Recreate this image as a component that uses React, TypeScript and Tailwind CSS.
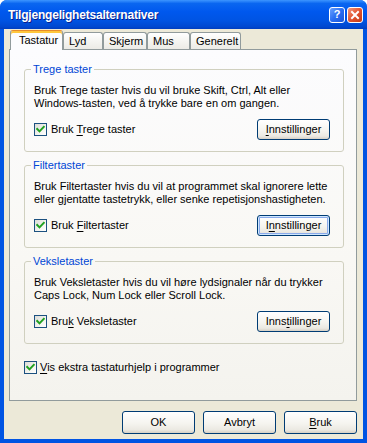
import React from 'react';

const CheckBox = () => (
  <span className="flex h-[13px] w-[13px] shrink-0 items-center justify-center border border-[#1c5180] bg-[linear-gradient(135deg,#dcdcd7_0%,#f4f4f0_60%,#ffffff_100%)]">
    <svg width="11" height="11" viewBox="0 0 11 11">
      <path d="M2.2 5 L4.5 7.4 L8.8 2.8" fill="none" stroke="#21a121" strokeWidth="2" strokeLinecap="square" />
    </svg>
  </span>
);

const U = ({ children }: { children: React.ReactNode }) => (
  <span className="underline underline-offset-[2px]">{children}</span>
);

const XPButton = ({
  children,
  focused,
  className = '',
}: {
  children: React.ReactNode;
  focused?: boolean;
  className?: string;
}) => (
  <button
    className={`flex w-[73px] shrink-0 items-center justify-center rounded-[3px] border border-[#003c74] bg-[linear-gradient(180deg,#ffffff_0%,#f5f4ef_55%,#ebe9e2_85%,#d6d0c5_100%)] text-[11px] leading-none text-black ${
      focused ? 'shadow-[inset_0_0_0_1px_#cee7ff,inset_0_0_0_2px_#8aaaea]' : ''
    } ${className}`}
  >
    {children}
  </button>
);

const GroupBox = ({
  title,
  text,
  label,
  button,
  focused,
}: {
  title: string;
  text: React.ReactNode;
  label: React.ReactNode;
  button: React.ReactNode;
  focused?: boolean;
}) => (
  <fieldset className="h-[89px] w-[320px] rounded-[3px] border border-[#d0d0bf] pl-[9px] pr-[13px]">
    <legend className="-ml-[3px] px-[2px] text-[11px] leading-[13px] text-[#0046d5]">{title}</legend>
    <p className="mt-[8px] text-[11px] leading-[13px] text-black">{text}</p>
    <div className="mt-[9px] flex h-[21px] items-center justify-between">
      <div className="flex items-center gap-[4px] text-[11px] text-black">
        <CheckBox />
        <span>{label}</span>
      </div>
      <XPButton focused={focused} className="h-[21px]">
        {button}
      </XPButton>
    </div>
  </fieldset>
);

const Tab = ({ children, w, active }: { children: React.ReactNode; w: string; active?: boolean }) =>
  active ? (
    <div
      className={`relative z-10 -mb-px h-[20px] ${w} rounded-t-[3px] border-x border-t border-x-[#919b9c] border-t-[#e68b2c] bg-[#fcfcfe] pl-[8px] pt-[3px] text-[11px] leading-[13px] text-black shadow-[inset_0_2px_0_#ffc73c]`}
    >
      {children}
    </div>
  ) : (
    <div
      className={`h-[17px] ${w} rounded-t-[3px] border-x border-t border-[#919b9c] bg-[linear-gradient(180deg,#ffffff_0%,#f3f3ef_60%,#ecebe6_100%)] pl-[5px] pt-[2px] text-[11px] leading-[13px] text-black`}
    >
      {children}
    </div>
  );

export default function App() {
  return (
    <div className="flex h-[443px] w-[367px] flex-col overflow-hidden rounded-t-[7px] bg-[#0054e3] font-['Liberation_Sans',Arial,sans-serif]">
      {/* Title bar */}
      <div className="flex h-[29px] shrink-0 items-center justify-between bg-[linear-gradient(180deg,#3d95ff_0%,#0a66f0_12%,#0058ee_40%,#0054e3_70%,#0048d0_92%,#003dbf_100%)] pl-[8px] pr-[4px]">
        <span className="text-[12px] font-bold tracking-[-0.2px] text-white [text-shadow:1px_1px_#0a1e8a]">
          Tilgjengelighetsalternativer
        </span>
        <div className="flex items-center gap-[2px]">
          <div className="flex h-[16px] w-[16px] items-center justify-center rounded-[3px] border border-white bg-[linear-gradient(135deg,#6aa2ff_0%,#2a6ef2_50%,#1a55d9_100%)] text-[11px] font-bold leading-none text-white">
            ?
          </div>
          <div className="flex h-[16px] w-[16px] items-center justify-center rounded-[3px] border border-white bg-[linear-gradient(135deg,#f19a80_0%,#e2532f_50%,#c23a17_100%)]">
            <svg width="10" height="10" viewBox="0 0 10 10">
              <path d="M2 2 L8 8 M8 2 L2 8" stroke="#ffffff" strokeWidth="2" strokeLinecap="square" />
            </svg>
          </div>
        </div>
      </div>

      {/* Body */}
      <div className="mx-[4px] mb-[4px] flex flex-1 flex-col bg-[#ece9d8] pt-[1px]">
        <div className="ml-[6px] flex h-[19px] items-end">
          <Tab w="w-[53px]" active>
            Tastatur
          </Tab>
          <Tab w="w-[40px]">Lyd</Tab>
          <Tab w="w-[44px]">Skjerm</Tab>
          <Tab w="w-[43px]">Mus</Tab>
          <Tab w="w-[51px]">Generelt</Tab>
        </div>

        <div className="ml-[5px] flex h-[352px] w-[348px] flex-col gap-[7px] border border-[#919b9c] bg-[linear-gradient(180deg,#fcfcfe_0%,#f9f8f4_60%,#f4f3ee_100%)] pl-[14px] pt-[13px]">
          <GroupBox
            title="Trege taster"
            text={
              <>
                Bruk Trege taster hvis du vil bruke Skift, Ctrl, Alt eller
                <br />
                Windows-tasten, ved å trykke bare en om gangen.
              </>
            }
            label={
              <>
                Bruk <U>T</U>rege taster
              </>
            }
            button={
              <>
                <U>I</U>nnstillinger
              </>
            }
          />
          <GroupBox
            title="Filtertaster"
            text={
              <>
                Bruk Filtertaster hvis du vil at programmet skal ignorere lette
                <br />
                eller gjentatte tastetrykk, eller senke repetisjonshastigheten.
              </>
            }
            label={
              <>
                Bruk <U>F</U>iltertaster
              </>
            }
            button={
              <>
                I<U>n</U>nstillinger
              </>
            }
            focused
          />
          <GroupBox
            title="Veksletaster"
            text={
              <>
                Bruk Veksletaster hvis du vil høre lydsignaler når du trykker
                <br />
                Caps Lock, Num Lock eller Scroll Lock.
              </>
            }
            label={
              <>
                Bru<U>k</U> Veksletaster
              </>
            }
            button={
              <>
                Inns<U>t</U>illinger
              </>
            }
          />
          <div className="mt-[8px] flex items-center gap-[3px] text-[11px] text-black">
            <CheckBox />
            <span>
              <U>V</U>is ekstra tastaturhjelp i programmer
            </span>
          </div>
        </div>

        <div className="mt-[10px] flex justify-end gap-[8px] pr-[6px]">
          <XPButton className="h-[23px]">OK</XPButton>
          <XPButton className="h-[23px]">Avbryt</XPButton>
          <XPButton className="h-[23px]">
            <U>B</U>ruk
          </XPButton>
        </div>
      </div>
    </div>
  );
}
